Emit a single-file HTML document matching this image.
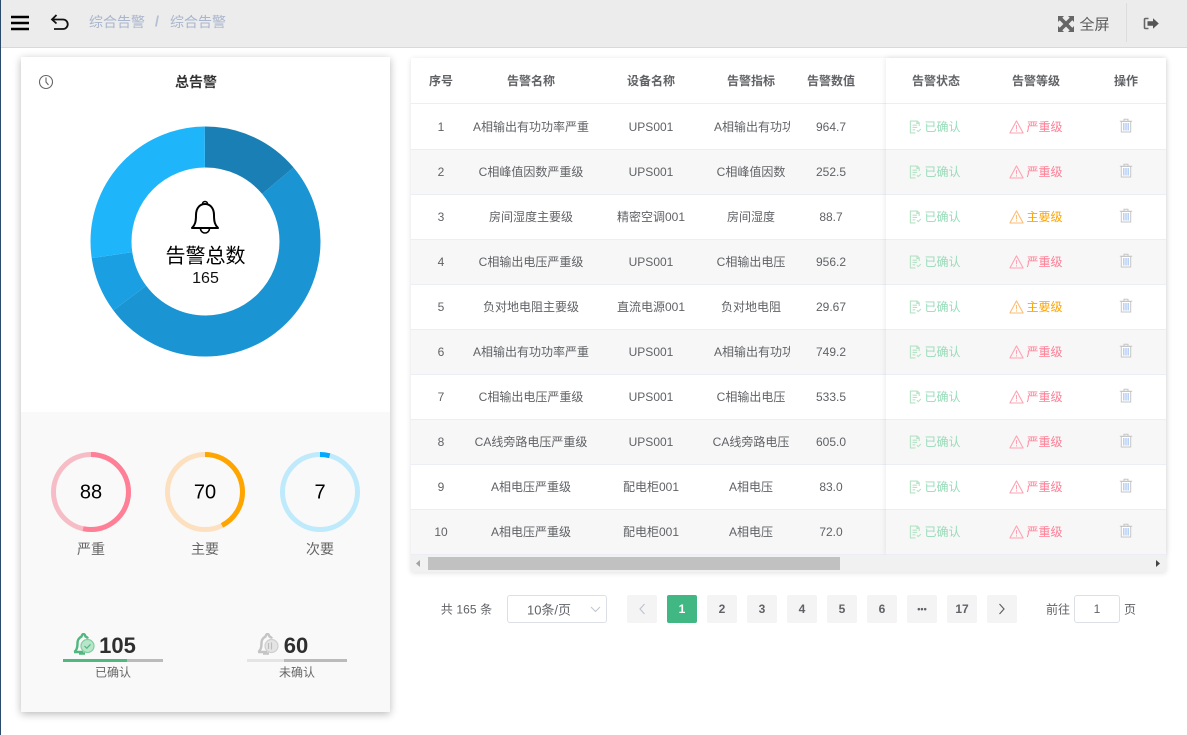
<!DOCTYPE html>
<html lang="zh-CN"><head><meta charset="utf-8"><title>综合告警</title>
<style>
*{box-sizing:border-box}
html,body{margin:0;padding:0;width:1187px;height:735px;overflow:hidden;background:#fff;font-family:"Liberation Sans","Noto Sans CJK SC",sans-serif;color:#606266}
.a{position:absolute}
.c{position:absolute;transform:translate(-50%,-50%);white-space:nowrap}
.r{display:grid;grid-template-columns:60px 120px 120px 80px 80px;height:45px;border-bottom:1px solid #ebeef5;font-size:12px;align-items:center;text-align:center;line-height:16px}
.r.h{height:46px;font-weight:bold}
.r.e{background:#f7f7f7}
.r.f1{height:46px}
.clip{display:block;width:76px;margin-left:3px;overflow:hidden;white-space:nowrap;text-align:left}
.f{grid-template-columns:100px 100px 80px}
.ok{color:#97dcb9;position:relative;left:-1px}
.re{color:#ff7f96}
.or{color:#ffa500}
.re svg{color:#ffa3b3}
.or svg{color:#fdbd75}
.f svg{vertical-align:-3px;margin-right:2px}
.f .t{margin:0;vertical-align:-1px}
.pg{position:absolute;top:595px;width:30px;height:28px;background:#f4f4f5;border-radius:2px;font-size:12px;font-weight:bold;text-align:center;line-height:28px;color:#606266}
</style></head><body>
<svg width="0" height="0" style="position:absolute">
<symbol id="doc" viewBox="0 0 14 14"><path d="M11 6V2.500L8.800 .6H1.500v12.800H7M8.500 1v2.200h2.500M3.800 5h5M3.800 7.500h5M3.800 10h3M8.500 10.500l1.500 1.500 2.800-2.800" fill="none" stroke="#b5e3c5" stroke-width="1.200"/></symbol>
<symbol id="warn" viewBox="0 0 14 14"><path d="M7 .9L13.600 13H.4Z" fill="none" stroke="currentColor" stroke-width="1.100" stroke-linejoin="round"/><path d="M7 5v4.300M7 10.300v1.200" stroke="currentColor" stroke-width="1"/></symbol>
<symbol id="tr" viewBox="0 0 14 14"><path d="M.8 2.800h12.400M5 2.500V.8h4v1.700" fill="none" stroke="#c6c6c6" stroke-width="1"/><path d="M2.300 3h9.400v10.500H2.300Z" fill="#fff" stroke="#c6c6c6" stroke-width="1"/><path d="M4.800 4.500v7.500M7 4.500v7.500M9.200 4.500v7.500" stroke="#b3cdf6" stroke-width="1.400"/></symbol>
</svg>

<div class="a" style="left:0;top:0;width:1px;height:735px;background:#2c4a6b;z-index:5"></div>

<!-- header -->
<div class="a" style="left:0;top:0;width:1187px;height:48px;background:#ececec;border-bottom:1px solid #d9d9d9"></div>
<svg class="a" style="left:11px;top:15px" width="18" height="16"><path d="M0 2h18M0 8h18M0 14h18" stroke="#000" stroke-width="2.500"/></svg>
<svg class="a" style="left:50px;top:13px" width="20" height="20" viewBox="0 0 20 20"><path d="M6.500 2L2 6.500 6.500 10.500M2.500 6.500H13a4.200 4.200 0 0 1 0 9.500H4" fill="none" stroke="#111" stroke-width="1.800"/></svg>
<div class="c" style="left:117px;top:22px;font-size:14px;color:#a9b5cc">综合告警</div>
<div class="c" style="left:157px;top:22px;font-size:15px;font-weight:bold;color:#b5bfd2">/</div>
<div class="c" style="left:198px;top:22px;font-size:14px;color:#a9b5cc">综合告警</div>
<svg class="a" style="left:1058px;top:16px" width="16" height="16" viewBox="0 0 16 16"><path d="M0 0h6L4.300 1.700 8 5.400 11.700 1.700 10 0h6v6l-1.700-1.700L10.600 8l3.700 3.700L16 10v6h-6l1.700-1.700L8 10.600l-3.700 3.700L6 16H0v-6l1.700 1.700L5.400 8 1.700 4.300 0 6Z" fill="#666"/></svg>
<div class="c" style="left:1094.500px;top:24px;font-size:15px;color:#5c5c5c">全屏</div>
<div class="a" style="left:1126px;top:3px;width:1px;height:39px;background:#dcdcdc"></div>
<svg class="a" style="left:1143px;top:16px" width="16" height="16" viewBox="0 0 16 16"><path d="M5.500 2.500H2.500a1 1 0 0 0-1 1v8a1 1 0 0 0 1 1h3" fill="none" stroke="#666" stroke-width="1.600"/><path d="M4.500 5.200h5.500V2.200L15.800 7.500l-5.800 5.300V9.800H4.500Z" fill="#555"/></svg>

<!-- left card -->
<div class="a" style="left:21px;top:57px;width:369px;height:655px;background:#fff;box-shadow:0 2px 8px rgba(0,0,0,.28)"></div>
<div class="a" style="left:21px;top:412px;width:369px;height:300px;background:#f9f9f9"></div>
<svg class="a" style="left:38px;top:74px" width="16" height="16" viewBox="0 0 16 16"><circle cx="8" cy="8" r="6.500" fill="none" stroke="#666" stroke-width="1.100"/><path d="M8 3.500V8l2.500 3" fill="none" stroke="#666" stroke-width="1.100"/></svg>
<div class="c" style="left:196px;top:82px;font-size:14px;font-weight:bold;color:#333">总告警</div>

<svg class="a" style="left:85px;top:121px" width="241" height="241" viewBox="0 0 241 241">
<g transform="rotate(-90 120.500 120.500)" fill="none" stroke-width="41">
<circle cx="120.500" cy="120.500" r="94.500" pathLength="360" stroke="#1a7fb5" stroke-dasharray="50 310"/>
<circle cx="120.500" cy="120.500" r="94.500" pathLength="360" stroke="#1a94d2" stroke-dasharray="183.500 176.500" stroke-dashoffset="-50"/>
<circle cx="120.500" cy="120.500" r="94.500" pathLength="360" stroke="#1a9fe2" stroke-dasharray="28.500 331.500" stroke-dashoffset="-233.500"/>
<circle cx="120.500" cy="120.500" r="94.500" pathLength="360" stroke="#1fb5fb" stroke-dasharray="98 262" stroke-dashoffset="-262"/>
</g></svg>
<svg class="a" style="left:189px;top:197px" width="32" height="38" viewBox="0 0 32 38"><path d="M3 31c3-3 4-6 4-13 0-7 4-11 9-11s9 4 9 11c0 7 1 10 4 13Z" fill="none" stroke="#000" stroke-width="2" stroke-linejoin="round"/><path d="M13.500 7a2.500 2.500 0 0 1 5 0M11.500 31.500a4.500 4.500 0 0 0 9 0" fill="none" stroke="#000" stroke-width="1.600"/></svg>
<div class="c" style="left:205.500px;top:254px;font-size:20px;color:#000">告警总数</div>
<div class="c" style="left:205.500px;top:279px;font-size:16px;color:#111">165</div>

<!-- rings -->
<svg class="a" style="left:41px;top:442px" width="330" height="100" viewBox="0 0 330 100" fill="none" stroke-width="5">
<circle cx="50" cy="50" r="37.500" stroke="#f6bdc6"/>
<circle cx="50" cy="50" r="37.500" stroke="#ff7f96" pathLength="360" stroke-dasharray="192 168" transform="rotate(-90 50 50)"/>
<circle cx="164" cy="50" r="37.500" stroke="#fde0bf"/>
<circle cx="164" cy="50" r="37.500" stroke="#ffa500" pathLength="360" stroke-dasharray="153 207" transform="rotate(-90 164 50)"/>
<circle cx="279" cy="50" r="37.500" stroke="#bfeafb"/>
<circle cx="279" cy="50" r="37.500" stroke="#00aaff" pathLength="360" stroke-dasharray="15 345" transform="rotate(-90 279 50)"/>
</svg>
<div class="c" style="left:91px;top:493px;font-size:20px;color:#000">88</div>
<div class="c" style="left:205px;top:493px;font-size:20px;color:#000">70</div>
<div class="c" style="left:320px;top:493px;font-size:20px;color:#000">7</div>
<div class="c" style="left:91px;top:549px;font-size:14px;color:#666">严重</div>
<div class="c" style="left:205px;top:549px;font-size:14px;color:#666">主要</div>
<div class="c" style="left:320px;top:549px;font-size:14px;color:#666">次要</div>

<!-- totals -->
<svg class="a" style="left:73px;top:633px" width="22" height="22" viewBox="0 0 22 22"><path d="M1.500 19c2-2 3-4 3-9 0-4 3-6 4-6.500C9 2 9.700 1 10.500 1s1.500 1 2 2.500c1 .4 2 1 2.500 2" fill="none" stroke="#52b77f" stroke-width="2.400"/><path d="M1 19h9M6 20.500h6" stroke="#52b77f" stroke-width="2.400"/><circle cx="14.500" cy="13" r="6.500" fill="#b9e6cb" stroke="#7fcfa1" stroke-width="1.200"/><path d="M11.500 13l2.300 2.300 3.700-4" fill="none" stroke="#52b77f" stroke-width="1.200"/></svg>
<svg class="a" style="left:257px;top:633px" width="22" height="22" viewBox="0 0 22 22"><path d="M1.500 19c2-2 3-4 3-9 0-4 3-6 4-6.500C9 2 9.700 1 10.500 1s1.500 1 2 2.500c1 .4 2 1 2.500 2" fill="none" stroke="#c4c4c4" stroke-width="2.400"/><path d="M1 19h9M6 20.500h6" stroke="#c4c4c4" stroke-width="2.400"/><circle cx="14.500" cy="13" r="6.500" fill="#e4e4e4" stroke="#cfcfcf" stroke-width="1.200"/><path d="M14.500 9.500v7M11.500 10v6" stroke="#bdbdbd" stroke-width="1.200"/></svg>
<div class="c" style="left:117.500px;top:646px;font-size:22px;font-weight:bold;color:#2f2f2f">105</div>
<div class="c" style="left:296px;top:646px;font-size:22px;font-weight:bold;color:#2f2f2f">60</div>
<div class="a" style="left:63px;top:659px;width:100px;height:3px;background:#bbb"></div>
<div class="a" style="left:63px;top:659px;width:64px;height:3px;background:#52b77f"></div>
<div class="a" style="left:247px;top:659px;width:100px;height:3px;background:#bbb"></div>
<div class="a" style="left:247px;top:659px;width:37px;height:3px;background:#e5e5e5"></div>
<div class="c" style="left:113px;top:672px;font-size:12px;color:#666">已确认</div>
<div class="c" style="left:297px;top:672px;font-size:12px;color:#666">未确认</div>

<!-- table card -->
<div class="a" style="left:411px;top:58px;width:755px;height:514px;background:#fff;box-shadow:0 1px 5px rgba(0,0,0,.12)"></div>
<div class="a" style="left:411px;top:58px;width:475px">
<div class="r h"><span>序号</span><span>告警名称</span><span>设备名称</span><span>告警指标</span><span>告警数值</span></div>
<div class="r f1"><span>1</span><span>A相输出有功功率严重</span><span>UPS001</span><span class="clip">A相输出有功功率</span><span>964.7</span></div>
<div class="r e"><span>2</span><span>C相峰值因数严重级</span><span>UPS001</span><span>C相峰值因数</span><span>252.5</span></div>
<div class="r"><span>3</span><span>房间湿度主要级</span><span>精密空调001</span><span>房间湿度</span><span>88.7</span></div>
<div class="r e"><span>4</span><span>C相输出电压严重级</span><span>UPS001</span><span>C相输出电压</span><span>956.2</span></div>
<div class="r"><span>5</span><span>负对地电阻主要级</span><span>直流电源001</span><span>负对地电阻</span><span>29.67</span></div>
<div class="r e"><span>6</span><span>A相输出有功功率严重</span><span>UPS001</span><span class="clip">A相输出有功功率</span><span>749.2</span></div>
<div class="r"><span>7</span><span>C相输出电压严重级</span><span>UPS001</span><span>C相输出电压</span><span>533.5</span></div>
<div class="r e"><span>8</span><span>CA线旁路电压严重级</span><span>UPS001</span><span>CA线旁路电压</span><span>605.0</span></div>
<div class="r"><span>9</span><span>A相电压严重级</span><span>配电柜001</span><span>A相电压</span><span>83.0</span></div>
<div class="r e"><span>10</span><span>A相电压严重级</span><span>配电柜001</span><span>A相电压</span><span>72.0</span></div>
</div>
<div class="a" style="left:886px;top:58px;width:280px;background:#fff;box-shadow:0 0 6px rgba(0,0,0,.1)">
<div class="r h f"><span>告警状态</span><span>告警等级</span><span>操作</span></div>
<div class="r f f1"><span class="ok"><svg width="13" height="14"><use href="#doc"/></svg>已确认</span><span class="re"><svg width="15" height="14"><use href="#warn"/></svg>严重级</span><span><svg class="t" width="14" height="15"><use href="#tr"/></svg></span></div>
<div class="r e f"><span class="ok"><svg width="13" height="14"><use href="#doc"/></svg>已确认</span><span class="re"><svg width="15" height="14"><use href="#warn"/></svg>严重级</span><span><svg class="t" width="14" height="15"><use href="#tr"/></svg></span></div>
<div class="r f"><span class="ok"><svg width="13" height="14"><use href="#doc"/></svg>已确认</span><span class="or"><svg width="15" height="14"><use href="#warn"/></svg>主要级</span><span><svg class="t" width="14" height="15"><use href="#tr"/></svg></span></div>
<div class="r e f"><span class="ok"><svg width="13" height="14"><use href="#doc"/></svg>已确认</span><span class="re"><svg width="15" height="14"><use href="#warn"/></svg>严重级</span><span><svg class="t" width="14" height="15"><use href="#tr"/></svg></span></div>
<div class="r f"><span class="ok"><svg width="13" height="14"><use href="#doc"/></svg>已确认</span><span class="or"><svg width="15" height="14"><use href="#warn"/></svg>主要级</span><span><svg class="t" width="14" height="15"><use href="#tr"/></svg></span></div>
<div class="r e f"><span class="ok"><svg width="13" height="14"><use href="#doc"/></svg>已确认</span><span class="re"><svg width="15" height="14"><use href="#warn"/></svg>严重级</span><span><svg class="t" width="14" height="15"><use href="#tr"/></svg></span></div>
<div class="r f"><span class="ok"><svg width="13" height="14"><use href="#doc"/></svg>已确认</span><span class="re"><svg width="15" height="14"><use href="#warn"/></svg>严重级</span><span><svg class="t" width="14" height="15"><use href="#tr"/></svg></span></div>
<div class="r e f"><span class="ok"><svg width="13" height="14"><use href="#doc"/></svg>已确认</span><span class="re"><svg width="15" height="14"><use href="#warn"/></svg>严重级</span><span><svg class="t" width="14" height="15"><use href="#tr"/></svg></span></div>
<div class="r f"><span class="ok"><svg width="13" height="14"><use href="#doc"/></svg>已确认</span><span class="re"><svg width="15" height="14"><use href="#warn"/></svg>严重级</span><span><svg class="t" width="14" height="15"><use href="#tr"/></svg></span></div>
<div class="r e f"><span class="ok"><svg width="13" height="14"><use href="#doc"/></svg>已确认</span><span class="re"><svg width="15" height="14"><use href="#warn"/></svg>严重级</span><span><svg class="t" width="14" height="15"><use href="#tr"/></svg></span></div>
</div>
<!-- scrollbar -->
<div class="a" style="left:411px;top:555px;width:755px;height:17px;background:#f1f1f1"></div>
<div class="a" style="left:428px;top:557px;width:412px;height:13px;background:#c1c1c1"></div>
<svg class="a" style="left:415px;top:560px" width="6" height="8"><path d="M5 0v7L1 3.500Z" fill="#a3a3a3"/></svg>
<svg class="a" style="left:1155px;top:560px" width="6" height="8"><path d="M1 0v7L5 3.500Z" fill="#444"/></svg>

<!-- pagination -->
<div class="c" style="left:466.500px;top:609px;font-size:12px;letter-spacing:.1px">共 165 条</div>
<div class="a" style="left:507px;top:595px;width:100px;height:28px;border:1px solid #dcdfe6;border-radius:3px;background:#fff"></div>
<div class="c" style="left:549px;top:609px;font-size:13px;color:#606266">10条/页</div>
<svg class="a" style="left:590px;top:606px" width="11" height="7"><path d="M1 1l4.500 4.500L10 1" fill="none" stroke="#c0c4cc" stroke-width="1"/></svg>
<div class="pg" style="left:627px"></div>
<svg class="a" style="left:638px;top:603px" width="8" height="12"><path d="M6.500 1L2 6l4.500 5" fill="none" stroke="#c0c4cc" stroke-width="1.200"/></svg>
<div class="pg" style="left:667px;background:#41b883;color:#fff">1</div>
<div class="pg" style="left:707px">2</div>
<div class="pg" style="left:747px">3</div>
<div class="pg" style="left:787px">4</div>
<div class="pg" style="left:827px">5</div>
<div class="pg" style="left:867px">6</div>
<div class="pg" style="left:907px;font-size:9px">•••</div>
<div class="pg" style="left:947px">17</div>
<div class="pg" style="left:987px"></div>
<svg class="a" style="left:998px;top:603px" width="8" height="12"><path d="M1.500 1L6 6l-4.500 5" fill="none" stroke="#606266" stroke-width="1.200"/></svg>
<div class="c" style="left:1058px;top:609px;font-size:12px">前往</div>
<div class="a" style="left:1074px;top:595px;width:46px;height:28px;border:1px solid #dcdfe6;border-radius:3px;background:#fff;text-align:center;line-height:26px;font-size:12px">1</div>
<div class="c" style="left:1130px;top:609px;font-size:12px">页</div>
</body></html>
